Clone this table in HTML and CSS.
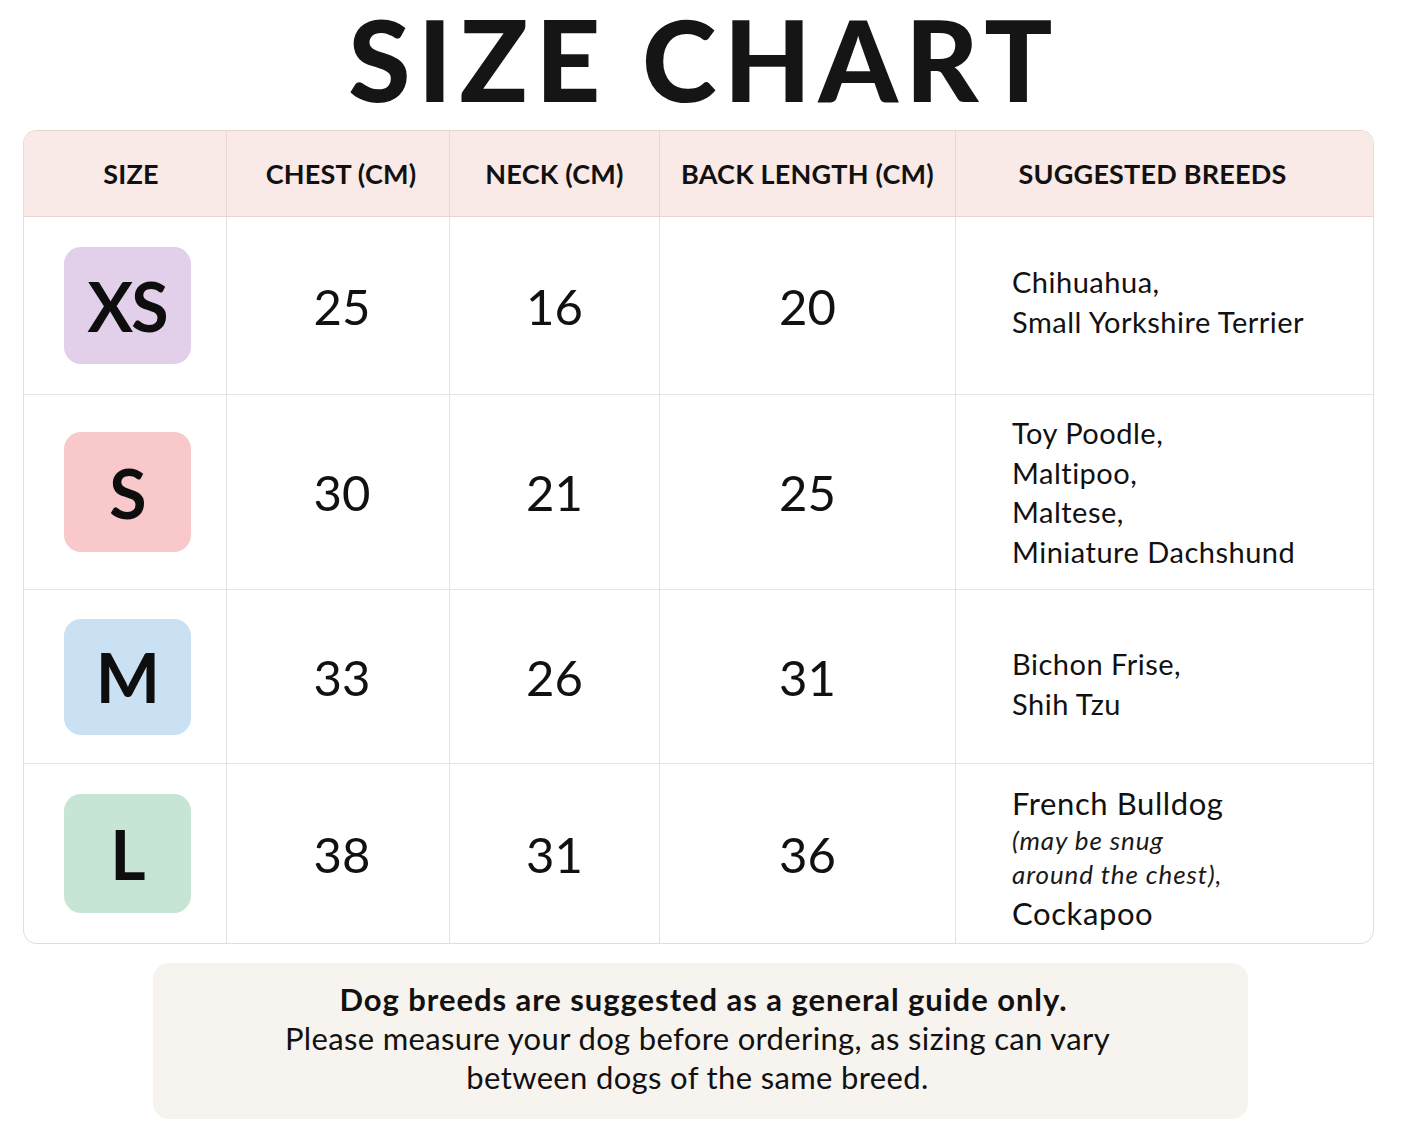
FILE: index.html
```html
<!DOCTYPE html>
<html lang="en">
<head>
<meta charset="utf-8">
<title>Size Chart</title>
<link rel="stylesheet" href="styles.css">
</head>
<body>
<main class="page">
  <h1 class="title">SIZE CHART</h1>
  <div class="chart">
    <div class="cell head size-head">SIZE</div>
    <div class="cell head chest-head">CHEST (CM)</div>
    <div class="cell head">NECK (CM)</div>
    <div class="cell head">BACK LENGTH (CM)</div>
    <div class="cell head last breeds-head">SUGGESTED BREEDS</div>

    <div class="cell"><span class="badge xs">XS</span></div>
    <div class="cell num chest">25</div>
    <div class="cell num">16</div>
    <div class="cell num">20</div>
    <div class="cell breeds last"><p class="row-xs">Chihuahua,<br>Small Yorkshire Terrier</p></div>

    <div class="cell"><span class="badge s">S</span></div>
    <div class="cell num chest">30</div>
    <div class="cell num">21</div>
    <div class="cell num">25</div>
    <div class="cell breeds last"><p>Toy Poodle,<br>Maltipoo,<br>Maltese,<br>Miniature Dachshund</p></div>

    <div class="cell"><span class="badge m">M</span></div>
    <div class="cell num chest">33</div>
    <div class="cell num">26</div>
    <div class="cell num">31</div>
    <div class="cell breeds last"><p class="row-m">Bichon Frise,<br>Shih Tzu</p></div>

    <div class="cell bottom"><span class="badge l">L</span></div>
    <div class="cell num chest bottom">38</div>
    <div class="cell num bottom">31</div>
    <div class="cell num bottom">36</div>
    <div class="cell breeds last bottom">
      <div class="breed-list">
        <span class="big">French Bulldog</span>
        <em class="note-i">(may be snug</em>
        <em class="note-i">around the chest),</em>
        <span class="big last-line">Cockapoo</span>
      </div>
    </div>
  </div>
  <div class="note">
    <p class="note-bold">Dog breeds are suggested as a general guide only.</p>
    <p class="note-text">Please measure your dog before ordering, as sizing can vary<br>between dogs of the same breed.</p>
  </div>
</main>
</body>
</html>
```

FILE: styles.css
```css
* { box-sizing: border-box; }
html, body { margin: 0; padding: 0; background: #ffffff; }
body {
  font-family: Lato, "Open Sans", "DejaVu Sans", sans-serif;
  color: #111111;
}
.page {
  width: 1402px;
  height: 1122px;
  padding: 0 28px 0 23px;
  display: flex;
  flex-direction: column;
  align-items: center;
}
.title {
  margin: 0;
  height: 130px;
  font-size: 113px;
  font-weight: 900;
  letter-spacing: 7.4px;
  line-height: 116px;
  color: #151515;
  padding-left: 11px;
  text-align: center;
  white-space: nowrap;
}
.chart {
  width: 1351px;
  display: grid;
  grid-template-columns: 203px 223px 210px 296px 1fr;
  grid-template-rows: 86px 178px 195px 174px 179px;
  border: 1px solid #dfdfdf;
  border-top-color: #ead3d0;
  border-radius: 14px;
  overflow: hidden;
}
.cell {
  display: flex;
  align-items: center;
  justify-content: center;
  border-right: 1px solid #e3e3e3;
  border-bottom: 1px solid #e3e3e3;
}
.cell.last { border-right: none; }
.cell.bottom { border-bottom: none; }
.head {
  background: #f9e9e7;
  border-right-color: #ebd5d2;
  border-bottom-color: #ebd3d0;
  font-size: 27px;
  font-weight: 700;
  letter-spacing: 0.2px;
  color: #111;
  padding-bottom: 1px;
}
.head.size-head { padding-left: 12px; }
.head.chest-head { padding-left: 6px; }
.head.breeds-head { padding-right: 24px; }
.num {
  font-size: 49px;
  font-weight: 400;
  color: #111;
}
.num.chest { padding-left: 8px; }
.badge {
  width: 127px;
  height: 117px;
  border-radius: 17px;
  display: flex;
  align-items: center;
  justify-content: center;
  font-size: 68px;
  font-weight: 700;
  letter-spacing: -2px;
  color: #0e0e0e;
  margin-left: 4px;
}
.badge.xs { background: #e2cfe9; }
.badge.s { background: #f8c8cb; height: 120px; }
.badge.m { background: #c9e1f3; height: 116px; }
.badge.l { background: #c6e5d4; height: 119px; }
.breeds {
  justify-content: flex-start;
  padding-left: 56px;
}
.breeds p {
  margin: 0;
  font-size: 29px;
  letter-spacing: 0.5px;
  line-height: 39.5px;
  color: #111;
}
.breeds p.row-xs { padding-bottom: 8px; }
.breeds p.row-m { padding-top: 14px; }
.breed-list {
  display: flex;
  flex-direction: column;
  padding-top: 10px;
}
.breed-list .big {
  font-size: 31px;
  letter-spacing: 0.6px;
  line-height: 40px;
  color: #111;
}
.breed-list .note-i {
  font-size: 26px;
  font-weight: 400;
  letter-spacing: 0.9px;
  line-height: 34px;
  color: #1a1a1a;
}
.breed-list .last-line { line-height: 44px; }
.note {
  margin-top: 19px;
  margin-left: 4px;
  width: 1095px;
  height: 156px;
  background: #f7f3ef;
  border-radius: 16px;
  display: flex;
  flex-direction: column;
  align-items: center;
  justify-content: center;
  text-align: center;
  padding-bottom: 6px;
}
.note p {
  margin: 0;
  font-size: 31px;
  line-height: 39px;
  color: #111;
}
.note-bold { font-weight: 700; letter-spacing: 0.95px; padding-left: 6px; }
.note-text { letter-spacing: 0.35px; padding-right: 6px; }
```
